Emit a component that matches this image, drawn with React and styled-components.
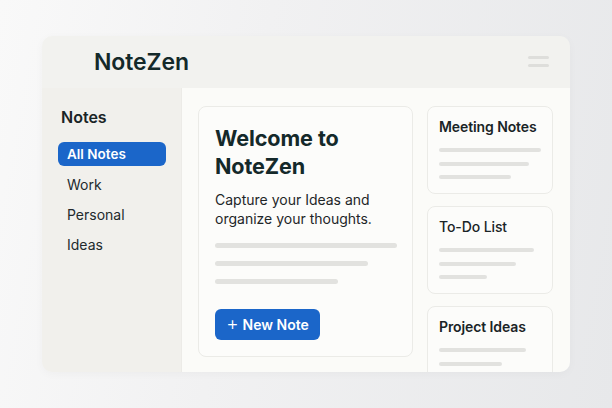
import React from "react";
import styled, { createGlobalStyle } from "styled-components";

const Global = createGlobalStyle`
  html, body { margin: 0; padding: 0; }
  body {
    width: 612px;
    height: 408px;
    overflow: hidden;
    font-family: Inter, "Noto Sans", "Liberation Sans", sans-serif;
    background: linear-gradient(100deg, #f9f9f9 0%, #f1f1f2 40%, #e7e8ea 100%);
  }
`;

const Page = styled.div`
  width: 612px;
  height: 408px;
  box-sizing: border-box;
  padding: 36px 42px 0 42px;
`;

const Window = styled.div`
  width: 528px;
  height: 336px;
  border-radius: 10px;
  overflow: hidden;
  display: grid;
  grid-template-rows: 52px 1fr;
  box-shadow: 0 2px 10px rgba(0, 0, 0, 0.03);
`;

const Header = styled.header`
  background: #f2f2ef;
  display: flex;
  align-items: center;
  justify-content: space-between;
  padding: 0 21px 0 52px;
`;

const Brand = styled.h1`
  margin: 0;
  font-size: 23px;
  font-weight: 600;
  letter-spacing: -0.1px;
  color: #14292a;
`;

const Burger = styled.div`
  display: flex;
  flex-direction: column;
  gap: 5px;
  width: 21px;
  margin-top: -1px;
`;

const BurgerLine = styled.span`
  display: block;
  height: 3px;
  border-radius: 2px;
  background: #dededb;
`;

const Body = styled.div`
  display: grid;
  grid-template-columns: 140px 1fr;
  min-height: 0;
`;

const Sidebar = styled.aside`
  background: #f1f0ec;
  padding: 19px 16px 0 16px;
  border-right: 1px solid #ecebe7;
`;

const SideTitle = styled.h2`
  margin: 0 0 15px 3px;
  font-size: 16px;
  line-height: 20px;
  font-weight: 600;
  color: #1a2426;
`;

const Nav = styled.nav`
  display: flex;
  flex-direction: column;
  gap: 6px;
`;

const NavItem = styled.div`
  height: 24px;
  width: 108px;
  box-sizing: border-box;
  display: flex;
  align-items: center;
  padding-left: 9px;
  border-radius: 6px;
  font-size: ${(p) => (p.$active ? "13.5px" : "14px")};
  font-weight: ${(p) => (p.$active ? 600 : 400)};
  color: ${(p) => (p.$active ? "#ffffff" : "#222a2c")};
  background: ${(p) => (p.$active ? "#1b66c9" : "transparent")};
`;

const Main = styled.main`
  background: #fbfbf8;
  padding: 18px 17px 0 16px;
  display: grid;
  grid-template-columns: 215px 126px;
  column-gap: 14px;
  align-items: start;
  min-height: 0;
  overflow: hidden;
`;

const Card = styled.section`
  background: #fcfcfa;
  border: 1px solid #ebebe7;
  border-radius: 8px;
  box-sizing: border-box;
`;

const WelcomeCard = styled(Card)`
  height: 251px;
  padding: 17px 16px 0 16px;
`;

const WelcomeTitle = styled.h2`
  margin: 0;
  font-size: 21.6px;
  line-height: 28px;
  font-weight: 700;
  color: #14292a;
  letter-spacing: -0.1px;
`;

const Lead = styled.p`
  margin: 10px 0 0 0;
  font-size: 14px;
  line-height: 19px;
  color: #1e2628;
`;

const Bars = styled.div`
  display: flex;
  flex-direction: column;
  gap: ${(p) => p.$gap}px;
  margin-top: ${(p) => p.$top}px;
`;

const Bar = styled.div`
  height: ${(p) => p.$h}px;
  border-radius: 3px;
  background: #e2e2df;
`;

const NewButton = styled.button`
  margin-top: 25px;
  height: 31px;
  width: 105px;
  border: none;
  border-radius: 6px;
  background: #1b66c9;
  color: #fff;
  font-family: inherit;
  font-size: 14px;
  font-weight: 600;
  display: flex;
  align-items: center;
  justify-content: center;
  gap: 4px;
  padding: 0;
`;

const Plus = styled.span`
  font-weight: 300;
  font-size: 19px;
  line-height: 1;
  margin-top: -2px;
`;

const Side = styled.div`
  display: flex;
  flex-direction: column;
  gap: 12px;
`;

const SmallCard = styled(Card)`
  height: 88px;
  padding: 11px 11px 0 11px;
`;

const SmallTitle = styled.h3`
  margin: 0;
  font-size: 14px;
  line-height: 18px;
  font-weight: ${(p) => p.$weight};
  color: #1a2426;
  letter-spacing: -0.1px;
`;

const notes = [
  { title: "Meeting Notes", weight: 600, bars: [102, 90, 72] },
  { title: "To-Do List", weight: 500, bars: [95, 77, 48] },
  { title: "Project Ideas", weight: 600, bars: [87, 63] },
];

export default function App() {
  return (
    <>
      <Global />
      <Page>
        <Window>
          <Header>
            <Brand>NoteZen</Brand>
            <Burger>
              <BurgerLine />
              <BurgerLine />
            </Burger>
          </Header>
          <Body>
            <Sidebar>
              <SideTitle>Notes</SideTitle>
              <Nav>
                <NavItem $active>All Notes</NavItem>
                <NavItem>Work</NavItem>
                <NavItem>Personal</NavItem>
                <NavItem>Ideas</NavItem>
              </Nav>
            </Sidebar>
            <Main>
              <WelcomeCard>
                <WelcomeTitle>
                  Welcome to
                  <br />
                  NoteZen
                </WelcomeTitle>
                <Lead>
                  Capture your Ideas and
                  <br />
                  organize your thoughts.
                </Lead>
                <Bars $gap={13} $top={15}>
                  <Bar $h={5} style={{ width: 182 }} />
                  <Bar $h={5} style={{ width: 153 }} />
                  <Bar $h={5} style={{ width: 123 }} />
                </Bars>
                <NewButton>
                  <Plus>+</Plus>
                  New Note
                </NewButton>
              </WelcomeCard>
              <Side>
                {notes.map((n) => (
                  <SmallCard key={n.title}>
                    <SmallTitle $weight={n.weight}>{n.title}</SmallTitle>
                    <Bars $gap={9.5} $top={12}>
                      {n.bars.map((w, i) => (
                        <Bar key={i} $h={4} style={{ width: w }} />
                      ))}
                    </Bars>
                  </SmallCard>
                ))}
              </Side>
            </Main>
          </Body>
        </Window>
      </Page>
    </>
  );
}
